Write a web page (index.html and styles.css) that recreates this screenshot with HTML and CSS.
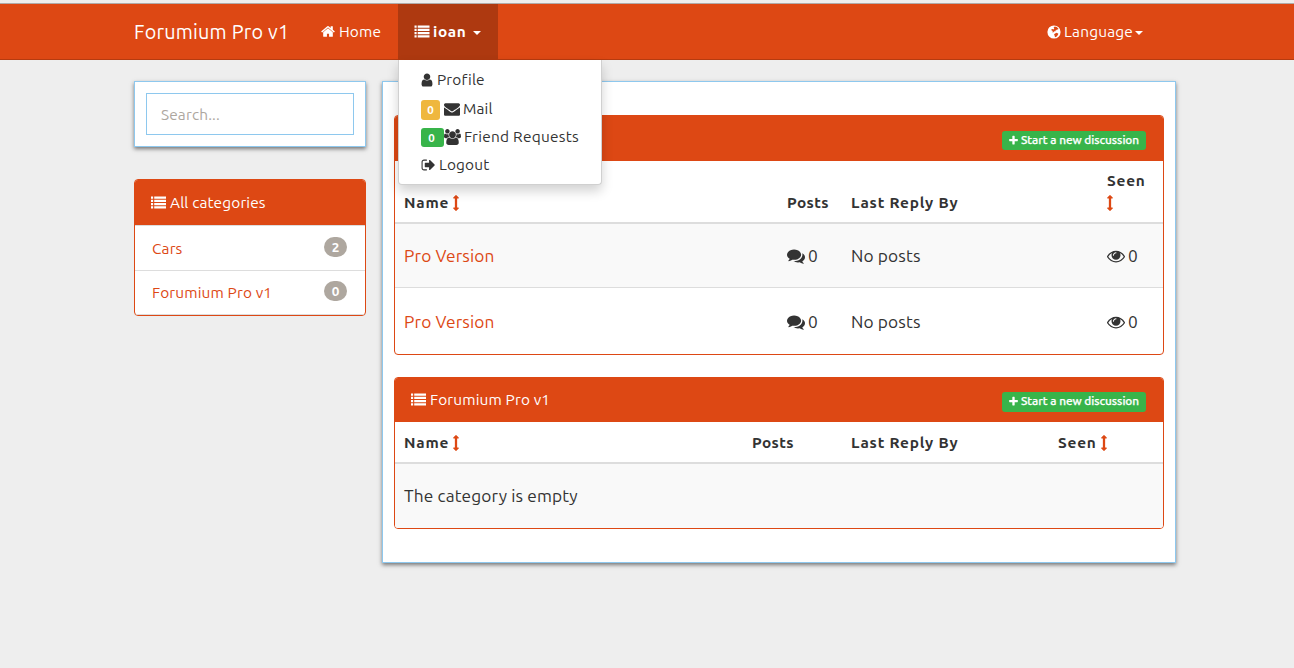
FILE: index.html
```html
<!DOCTYPE html>
<html lang="en">
<head>
<meta charset="utf-8">
<title>Forumium Pro v1</title>
<link rel="stylesheet" href="styles.css">
</head>
<body>
<svg class="sprite" aria-hidden="true">
  <symbol id="list" viewBox="0 0 1792 1792"><path d="M0 192h256v256H0zM384 192h1408v256H384zM0 576h256v256H0zM384 576h1408v256H384zM0 960h256v256H0zM384 960h1408v256H384zM0 1344h256v256H0zM384 1344h1408v256H384z"/></symbol>
  <symbol id="home" viewBox="64 0 1664 1792"><path d="M1472 992v480q0 26-19 45t-45 19h-384v-384h-256v384h-384q-26 0-45-19t-19-45v-480q0-1 .5-3t.5-3l575-474 575 474q1 2 1 6zm223-69l-62 74q-8 9-21 11h-3q-13 0-21-7l-692-577-692 577q-12 8-24 7-13-2-21-11l-62-74q-8-10-7-23.5t11-21.5l719-599q32-26 76-26t76 26l244 204v-195q0-14 9-23t23-9h192q14 0 23 9t9 23v408l219 182q10 8 11 21.5t-7 23.5z"/></symbol>
  <symbol id="user" viewBox="192 0 1408 1792"><path d="M1536 1399q0 109-62.5 187t-150.5 78h-854q-88 0-150.5-78t-62.5-187q0-85 8.5-160.5t31.5-152 58.5-131 94-89 134.5-34.5q131 128 313 128t313-128q76 0 134.5 34.5t94 89 58.5 131 31.5 152 8.5 160.5zm-256-887q0 159-112.5 271.5t-271.5 112.5-271.5-112.5-112.5-271.5 112.5-271.5 271.5-112.5 271.5 112.5 112.5 271.5z"/></symbol>
  <symbol id="mail" viewBox="0 0 1792 1792"><path d="M1792 710v794q0 66-47 113t-113 47h-1472q-66 0-113-47t-47-113v-794q44 49 101 87 362 246 497 345 57 42 92.5 65.5t94.5 48 110 24.5h2q51 0 110-24.5t94.5-48 92.5-65.5q170-123 498-345 57-39 100-87zm0-294q0 79-49 151t-122 123q-376 261-468 325-10 7-42.5 31t-54 38.5-52 32.5-57.5 27-50 9h-2q-23 0-50-9t-57.5-27-52-32.5-54-38.5-42.5-31q-91-64-262-182.5t-205-142.5q-62-42-117-115.5t-55-136.5q0-78 41.5-130t118.5-52h1472q65 0 112.5 47t47.5 113z"/></symbol>
  <symbol id="users" viewBox="0 0 1920 1792"><path d="M593 896q-162 5-265 128h-134q-82 0-138-40.5t-56-118.5q0-353 124-353 6 0 43.5 21t97.5 42.5 119 21.5q67 0 133-23-5 37-5 66 0 139 81 256zm1071 637q0 120-73 189.5t-194 69.5h-874q-121 0-194-69.5t-73-189.5q0-53 3.5-103.5t14-109 26.5-108.5 43-97.5 62-81 85.5-53.5 111.5-20q10 0 43 21.5t73 48 107 48 135 21.5 135-21.5 107-48 73-48 43-21.5q61 0 111.5 20t85.5 53.5 62 81 43 97.5 26.5 108.5 14 109 3.5 103.5zm-1024-1277q0 106-75 181t-181 75-181-75-75-181 75-181 181-75 181 75 75 181zm704 384q0 159-112.5 271.5t-271.5 112.5-271.5-112.5-112.5-271.5 112.5-271.5 271.5-112.5 271.5 112.5 112.5 271.5zm576 225q0 78-56 118.5t-138 40.5h-134q-103-123-265-128 81-117 81-256 0-29-5-66 66 23 133 23 59 0 119-21.5t97.5-42.5 43.5-21q124 0 124 353zm-128-609q0 106-75 181t-181 75-181-75-75-181 75-181 181-75 181 75 75 181z"/></symbol>
  <symbol id="logout" viewBox="0 0 1664 1792"><path d="M704 1440q0 4 1 20t.5 26.5-3 23.5-10 19.5-20.5 6.5h-320q-119 0-203.5-84.5t-84.5-203.5v-704q0-119 84.5-203.5t203.5-84.5h320q13 0 22.5 9.5t9.5 22.5q0 4 1 20t.5 26.5-3 23.5-10 19.5-20.5 6.5h-320q-66 0-113 47t-47 113v704q0 66 47 113t113 47h312l11.5 1 11.5 3 8 5.5 7 9 2 13.5zm928-544q0 26-19 45l-544 544q-19 19-45 19t-45-19-19-45v-288h-448q-26 0-45-19t-19-45v-384q0-26 19-45t45-19h448v-288q0-26 19-45t45-19 45 19l544 544q19 19 19 45z"/></symbol>
  <symbol id="globe" viewBox="0 0 14 14"><path fill-rule="evenodd" d="M7 .4a6.600 6.600 0 1 0 0 13.200a6.600 6.600 0 0 0 0-13.200zM7.800 1.600L9.700 2.100L11.500 3.700L11 4.600L9.900 4.400L9.300 5.300L8.200 5.800L8.400 6.600L7.100 6.300L6.500 7.200L5.500 7.500L5.700 6.100L4.700 5.600L4.200 4.400L5.400 4.100L6.400 4.400L7.300 3.400L6.600 2.600zM8 8.500L9.700 7.800L11.400 8.800L10.700 10.300L9.400 11.700L8 12.200L7.700 10.800L7 9.600z"/></symbol>
  <symbol id="plus" viewBox="192 0 1408 1792"><path d="M1600 736v192q0 40-28 68t-68 28h-416v416q0 40-28 68t-68 28h-192q-40 0-68-28t-28-68v-416h-416q-40 0-68-28t-28-68v-192q0-40 28-68t68-28h416v-416q0-40 28-68t68-28h192q40 0 68 28t28 68v416h416q40 0 68 28t28 68z"/></symbol>
  <symbol id="sort" viewBox="576 0 640 1792"><path d="M1216 320q0 26-19 45t-45 19h-128v1024h128q26 0 45 19t19 45-19 45l-256 256q-19 19-45 19t-45-19l-256-256q-19-19-19-45t19-45 45-19h128v-1024h-128q-26 0-45-19t-19-45 19-45l256-256q19-19 45-19t45 19l256 256q19 19 19 45z"/></symbol>
  <symbol id="eye" viewBox="0 0 1792 1792"><path d="M1664 960q-152-236-381-353 61 104 61 225 0 185-131.5 316.5t-316.5 131.5-316.500-131.500-131.500-316.500q0-121 61-225-229 117-381 353 133 205 333.500 326.500t434.500 121.500 434.500-121.500 333.500-326.500zm-720-384q0-20-14-34t-34-14q-125 0-214.500 89.500t-89.500 214.500q0 20 14 34t34 14 34-14 14-34q0-86 61-147t147-61q20 0 34-14t14-34zm848 384q0 34-20 69-140 230-376.500 368.500t-499.500 138.500-499.500-139-376.500-368q-20-35-20-69t20-69q140-229 376.500-368t499.500-139 499.500 139 376.500 368q20 35 20 69z"/></symbol>
  <symbol id="comments" viewBox="0 0 1792 1792"><path d="M1408 768q0 139-94 257t-256.500 186.500-353.500 68.500q-86 0-176-16-124 88-278 128-36 9-86 16h-3q-11 0-20.500-8t-11.500-21q-1-3-1-6.500t.5-6.500 2-6l2.500-5 3.500-5.500 4-5 4.500-5 4-4.500q5-6 23-25t26-29.500 22.500-29 25-38.500 20.500-44q-124-72-195-177t-71-224q0-139 94-257t256.500-186.500 353.500-68.500 353.500 68.500 256.500 186.500 94 257zm384 256q0 120-71 224.500t-195 176.500q10 24 20.500 44t25 38.500 22.500 29 26 29.500 23 25q1 1 4 4.500t4.500 5 4 5 3.500 5.500l2.500 5 2 6 .5 6.500-1 6.500q-3 14-13 22t-22 7q-50-7-86-16-154-40-278-128-90 16-176 16-271 0-472-132 58 4 88 4 161 0 309-45t264-129q125-92 192-212t67-254q0-77-23-152 129 71 204 178t75 230z"/></symbol>
</svg>

<nav class="navbar">
  <div class="container nav-inner">
    <a class="brand">Forumium Pro v1</a>
    <a class="nav-link"><svg class="icon home"><use href="#home"/></svg><span class="t-home">Home</span></a>
    <div class="nav-link active">
      <svg class="icon list"><use href="#list"/></svg><b>ioan</b><i class="caret"></i>
      <ul class="menu">
        <li><svg class="icon user"><use href="#user"/></svg><span>Profile</span></li>
        <li class="mail-item"><span class="label warning">0</span><svg class="icon mail"><use href="#mail"/></svg><span>Mail</span></li>
        <li><span class="label success">0</span><svg class="icon users"><use href="#users"/></svg><span class="t-friends">Friend Requests</span></li>
        <li><svg class="icon logout"><use href="#logout"/></svg><span>Logout</span></li>
      </ul>
    </div>
    <a class="nav-link language"><svg class="icon globe"><use href="#globe"/></svg><span class="t-lang">Language</span><i class="caret"></i></a>
  </div>
</nav>

<div class="container page">
  <aside class="sidebar">
    <div class="box search"><input type="text" placeholder="Search..."></div>
    <section class="panel categories">
      <h3 class="panel-head"><svg class="icon list"><use href="#list"/></svg><span>All categories</span></h3>
      <a class="category"><span>Cars</span><span class="badge">2</span></a>
      <a class="category"><span>Forumium Pro v1</span><span class="badge">0</span></a>
    </section>
  </aside>

  <main class="box content">
    <section class="panel first">
      <h3 class="panel-head">
        <a class="new"><svg class="icon plus"><use href="#plus"/></svg><span>Start a new discussion</span></a></h3>
      <table>
        <colgroup><col class="c-name"><col class="c-posts"><col class="c-last"><col></colgroup>
        <thead><tr><th>Name<svg class="icon sort"><use href="#sort"/></svg></th><th class="posts">Posts</th><th class="last">Last Reply By</th><th>Seen <svg class="icon sort wrap"><use href="#sort"/></svg></th></tr></thead>
        <tbody>
          <tr><td><a>Pro Version</a></td><td><svg class="icon comments"><use href="#comments"/></svg>0</td><td>No posts</td><td><svg class="icon eye"><use href="#eye"/></svg>0</td></tr>
          <tr><td><a>Pro Version</a></td><td><svg class="icon comments"><use href="#comments"/></svg>0</td><td>No posts</td><td><svg class="icon eye"><use href="#eye"/></svg>0</td></tr>
        </tbody>
      </table>
    </section>
    <section class="panel second">
      <h3 class="panel-head"><svg class="icon list"><use href="#list"/></svg><span>Forumium Pro v1</span>
        <a class="new"><svg class="icon plus"><use href="#plus"/></svg><span>Start a new discussion</span></a></h3>
      <table>
        <colgroup><col class="c-name"><col class="c-posts"><col class="c-last"><col></colgroup>
        <thead><tr><th>Name<svg class="icon sort"><use href="#sort"/></svg></th><th class="posts">Posts</th><th class="last">Last Reply By</th><th>Seen<svg class="icon sort"><use href="#sort"/></svg></th></tr></thead>
        <tbody><tr><td colspan="4">The category is empty</td></tr></tbody>
      </table>
    </section>
  </main>
</div>
</body>
</html>
```
FILE: styles.css
```css
* { box-sizing: border-box; }
html { background: #eee; }
body {
  margin: 0;
  padding-top: 3px;
  min-height: 100vh;
  color: #333;
  font: 15.4px/22px Ubuntu, "Noto Sans", sans-serif;
  letter-spacing: .14px;
}
.sprite { position: absolute; width: 0; height: 0; }
.icon { display: inline-block; width: 15px; height: 15px; fill: currentColor; flex: none; }
.container { width: 1042px; margin-left: 134px; }

.navbar {
  height: 57px;
  background: #dd4814;
  border-top: 1px solid #b0aaa8;
  border-bottom: 1px solid #b53b10;
  color: #fff;
}
.nav-inner { display: flex; height: 55px; }
.brand { width: 172px; padding-top: 17px; font-size: 19.8px; letter-spacing: .24px; white-space: nowrap; }
.nav-link { position: relative; display: flex; align-items: center; height: 55px; padding-left: 15px; white-space: nowrap; }
.icon.home { width: 14px; margin: 0 4px 0 0; }
.t-home { width: 42px; }
.active { margin-left: 17px; width: 100px; height: 56px; background: #ae3910; padding-bottom: 1px; }
.active > .icon { width: 16px; margin: 0 3px 1px 1px; }
.active > b { width: 35px; letter-spacing: .6px; }
.caret { width: 0; height: 0; border: 4px solid transparent; border-top-color: #fff; border-bottom: 0; margin-top: 3px; }
.active .caret { margin-left: 5px; }
.language { margin-left: auto; margin-right: 33px; padding: 0; }
.t-lang { width: 70px; letter-spacing: .2px; }
.icon.globe { width: 14px; height: 14px; margin-right: 3px; }
.language .caret { margin-left: 1px; }

.menu {
  position: absolute;
  z-index: 5;
  left: 0;
  top: 56px;
  width: 204px;
  height: 125px;
  margin: 0;
  padding: 6px 0 0 22px;
  list-style: none;
  background: #fff;
  border: 1px solid #d0d0d0;
  border-top: 0;
  border-radius: 0 0 4px 4px;
  box-shadow: 0 6px 12px rgba(0, 0, 0, .18);
  color: #333;
}
.menu li { display: flex; align-items: center; height: 28.3px; }
.menu .mail-item { padding-top: 2px; }
.label { display: block; height: 20px; border-radius: 3px; color: #fff; font-size: 11.5px; font-weight: 700; line-height: 19px; text-align: center; margin-top: 2px; letter-spacing: 0; }
.warning { width: 19px; background: #efb73e; margin-right: 4px; }
.success { width: 23px; height: 19px; background: #38b44a; padding-right: 2px; }
.icon.user { width: 12px; height: 16px; margin: 0 4px 0 0; }
.icon.mail { width: 16px; height: 16px; margin-right: 3px; }
.icon.users { width: 17px; height: 16px; margin-right: 3px; }
.icon.logout { width: 14px; height: 16px; margin: 0 4px 0 0; }
.t-friends { letter-spacing: .27px; }

.page { display: flex; gap: 16px; align-items: flex-start; padding-top: 21px; }
.sidebar { width: 232px; }
.box { background: #fff; border: 1px solid #8ec8ee; box-shadow: 0 2px 4px rgba(0, 0, 0, .5); }
.search { height: 66px; padding: 11px; }
.search input {
  display: block;
  width: 208px;
  height: 42px;
  padding: 0 14px;
  border: 1px solid #8ec8ee;
  font: inherit;
  letter-spacing: .15px;
  outline: 0;
}
.search input::placeholder { color: #aea79f; opacity: 1; }

.panel { background: #fff; border: 1px solid #dd4814; border-radius: 4px; overflow: hidden; }
.panel-head { display: flex; align-items: center; height: 45px; margin: 0; padding: 0 17px 0 16px; background: #dd4814; color: #fff; font-size: 15.4px; font-weight: 400; }
.panel-head .list { margin: 0 4px 1px 0; }
.categories { margin-top: 32px; height: 137px; }
.category { display: flex; justify-content: space-between; align-items: center; height: 45px; padding: 2px 18px 0 17px; border-top: 1px solid #ddd; color: #dd4814; }
.category + .category { border-bottom: 1px solid #ddd; padding-top: 0; }
.badge { width: 23px; height: 20px; margin-top: -4px; border-radius: 10px; background: #aea79f; color: #fff; font-size: 13.5px; font-weight: 700; line-height: 20px; text-align: center; letter-spacing: 0; }

.content { width: 794px; height: 482px; padding: 33px 11px 0; }
.first { height: 240px; margin-bottom: 22px; }
.second { height: 152px; }
.second .panel-head { height: 44px; }
.new { display: flex; align-items: center; width: 144px; height: 19px; margin: 4px 0 0 auto; padding: 0 7px 1px; border-radius: 3px; background: #38b44a; font-size: 11.8px; font-weight: 500; letter-spacing: -.05px; -webkit-text-stroke: .25px #fff; white-space: nowrap; }
.second .new { height: 20px; margin-top: 3px; }
.icon.plus { width: 9px; height: 11px; margin-right: 3px; }

table { width: 768px; table-layout: fixed; border-collapse: separate; border-spacing: 0; }
.first .c-name { width: 383px; }
.first .c-posts { width: 64px; }
.first .c-last { width: 256px; }
.second .c-name { width: 348px; }
.second .c-posts { width: 99px; }
.second .c-last { width: 207px; }
th { height: 63px; padding: 8px 9px; vertical-align: bottom; text-align: left; border-bottom: 2px solid #ddd; font-size: 15.4px; font-weight: 600; letter-spacing: .8px; white-space: nowrap; }
.posts { letter-spacing: .4px; }
.second th { height: 42px; padding-bottom: 8px; }
.first th:last-child { padding-right: 0; white-space: normal; }
.icon.sort { width: 6px; height: 16px; margin-left: 4px; color: #dd4814; vertical-align: -3px; }
.icon.sort.wrap { display: block; margin: 3px 0 3px; }
td { height: 64px; padding: 0 9px; font-size: 17.3px; vertical-align: middle; white-space: nowrap; }
td a { color: #dd4814; }
tbody tr:first-child td { background: #f9f9f9; }
.first tbody tr:first-child td { height: 63px; padding-top: 1px; }
tbody tr + tr td { height: 68px; padding-top: 1px; border-top: 1px solid #ddd; }
td .icon { width: 18px; height: 18px; margin-right: 3px; vertical-align: -3px; }
```
